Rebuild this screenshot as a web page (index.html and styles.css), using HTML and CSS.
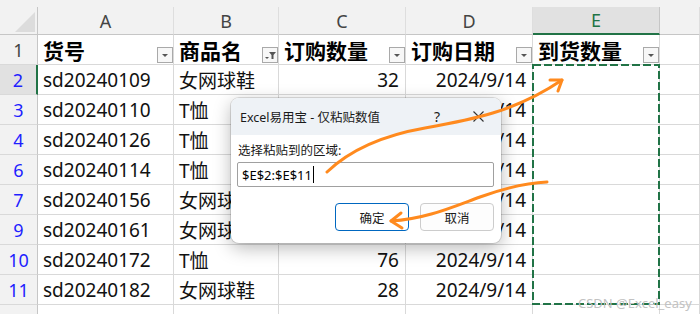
FILE: index.html
```html
<html>
  <head>
    <title>到货数量 - 仅粘贴数值</title>
    <link rel="stylesheet" href="styles.css">
  </head>
  <body>
    <div class="strip"></div>
    <div class="sheet">
      <div class="corner"><span class="tri"></span></div>
      <div class="colhead">A</div>
      <div class="colhead">B</div>
      <div class="colhead">C</div>
      <div class="colhead">D</div>
      <div class="colhead active">E</div>
      <div class="colhead"></div>

      <div class="rowhead plain">1</div>
      <div class="cell head">货号<span class="filter"><svg width="14" height="14"><polygon points="4,6 10,6 7,9" fill="#555"/></svg></span></div>
      <div class="cell head">商品名<span class="filter"><svg width="14" height="14"><polygon points="2,9 6,9 4,11" fill="#555"/><polygon points="6,4 13,4 10.5,7 10.5,11 8.5,11 8.5,7" fill="#555"/></svg></span></div>
      <div class="cell head">订购数量<span class="filter"><svg width="14" height="14"><polygon points="4,6 10,6 7,9" fill="#555"/></svg></span></div>
      <div class="cell head">订购日期<span class="filter"><svg width="14" height="14"><polygon points="4,6 10,6 7,9" fill="#555"/></svg></span></div>
      <div class="cell head">到货数量<span class="filter"><svg width="14" height="14"><polygon points="4,6 10,6 7,9" fill="#555"/></svg></span></div>
      <div class="cell"></div>

      <div class="rowhead active">2</div>
      <div class="cell">sd20240109</div>
      <div class="cell">女网球鞋</div>
      <div class="cell num">32</div>
      <div class="cell num">2024/9/14</div>
      <div class="cell"></div>
      <div class="cell"></div>

      <div class="rowhead">3</div>
      <div class="cell">sd20240110</div>
      <div class="cell">T恤</div>
      <div class="cell num">45</div>
      <div class="cell num">2024/9/14</div>
      <div class="cell"></div>
      <div class="cell"></div>

      <div class="rowhead">4</div>
      <div class="cell">sd20240126</div>
      <div class="cell">T恤</div>
      <div class="cell num">60</div>
      <div class="cell num">2024/9/14</div>
      <div class="cell"></div>
      <div class="cell"></div>

      <div class="rowhead">6</div>
      <div class="cell">sd20240114</div>
      <div class="cell">T恤</div>
      <div class="cell num">38</div>
      <div class="cell num">2024/9/14</div>
      <div class="cell"></div>
      <div class="cell"></div>

      <div class="rowhead">7</div>
      <div class="cell">sd20240156</div>
      <div class="cell">女网球鞋</div>
      <div class="cell num">25</div>
      <div class="cell num">2024/9/14</div>
      <div class="cell"></div>
      <div class="cell"></div>

      <div class="rowhead">9</div>
      <div class="cell">sd20240161</div>
      <div class="cell">女网球鞋</div>
      <div class="cell num">52</div>
      <div class="cell num">2024/9/14</div>
      <div class="cell"></div>
      <div class="cell"></div>

      <div class="rowhead">10</div>
      <div class="cell">sd20240172</div>
      <div class="cell">T恤</div>
      <div class="cell num">76</div>
      <div class="cell num">2024/9/14</div>
      <div class="cell"></div>
      <div class="cell"></div>

      <div class="rowhead">11</div>
      <div class="cell">sd20240182</div>
      <div class="cell">女网球鞋</div>
      <div class="cell num">28</div>
      <div class="cell num">2024/9/14</div>
      <div class="cell"></div>
      <div class="cell"></div>

      <div class="rowhead"></div>
      <div class="cell"></div>
      <div class="cell"></div>
      <div class="cell"></div>
      <div class="cell"></div>
      <div class="cell"></div>
      <div class="cell"></div>
    </div>

    <!-- copy marquee around E2:E11 -->
    <svg class="marquee" width="700" height="314">
      <rect x="533" y="65" width="126" height="239" fill="none" stroke="#217346" stroke-width="2" stroke-dasharray="8 3"/>
    </svg>

    <div class="dialog">
      <div class="dlg-title">
        <span class="dlg-name">Excel易用宝 - 仅粘贴数值</span>
        <span class="help">?</span>
        <span class="close"><svg width="11" height="11"><path d="M0.5 0.5 L10.5 10.5 M10.5 0.5 L0.5 10.5" stroke="#333" stroke-width="1.1"/></svg></span>
      </div>
      <div class="dlg-body">
        <div class="label">选择粘贴到的区域:</div>
        <div class="input">$E$2:$E$11<span class="caret"></span></div>
        <div class="buttons">
          <button class="btn primary">确定</button>
          <button class="btn">取消</button>
        </div>
      </div>
    </div>

    <svg class="arrows" width="700" height="314">
      <path d="M327 172 C352 148 385 135 425 128 C470 120 515 112 562 80" fill="none" stroke="#ff8a1e" stroke-width="3" stroke-linecap="round"/>
      <path d="M550 80 L562 80 L558 91" fill="none" stroke="#ff8a1e" stroke-width="3" stroke-linecap="round" stroke-linejoin="round"/>
      <path d="M547 182 C525 183 505 188 480 197 C450 208 425 219 391 221" fill="none" stroke="#ff8a1e" stroke-width="3" stroke-linecap="round"/>
      <path d="M401 213 L391 221 L402 228" fill="none" stroke="#ff8a1e" stroke-width="3" stroke-linecap="round" stroke-linejoin="round"/>
    </svg>

    <div class="watermark">CSDN @Excel_easy</div>
  </body>
</html>
```

FILE: styles.css
```css
body,
html {
  margin: 0;
  padding: 0;
  background: #ffffff;
  overflow: hidden;
  font-family: "Noto Sans", "Noto Sans CJK SC", sans-serif;
}

.strip {
  height: 7px;
  background: #f2f2f2;
}

.sheet {
  display: grid;
  grid-template-columns: 38px 136px 105px 127px 127px 127px 40px;
  grid-template-rows: 28px;
  grid-auto-rows: 30px;
}

.sheet > div {
  box-sizing: border-box;
  border-right: 1px solid #d9d9d9;
  border-bottom: 1px solid #d9d9d9;
}

.corner {
  background: #f2f2f2;
  position: relative;
  border-right: 1px solid #c6c6c6 !important;
  border-bottom: 1px solid #c6c6c6 !important;
}

.corner .tri {
  position: absolute;
  right: 2px;
  bottom: 2px;
  width: 0;
  height: 0;
  border-left: 20px solid transparent;
  border-bottom: 20px solid #dcdcdc;
}

.colhead {
  background: #f2f2f2;
  color: #444;
  font-size: 18px;
  display: flex;
  align-items: center;
  justify-content: center;
  border-bottom: 1px solid #c6c6c6 !important;
  border-right: 1px solid #dedede !important;
}

.colhead.active {
  background: #e1e1e1;
  color: #217346;
  border-bottom: 2px solid #217346 !important;
  border-right: 1px solid #c6c6c6 !important;
}

.rowhead {
  background: #f2f2f2;
  color: #1f1fff;
  font-size: 18px;
  display: flex;
  align-items: center;
  justify-content: center;
  border-right: 1px solid #c6c6c6 !important;
}

.rowhead.plain {
  color: #444;
}

.rowhead.active {
  background: #e1e1e1;
  border-right: 2px solid #217346 !important;
}

.cell {
  font-size: 19px;
  color: #111;
  padding: 0 5px;
  display: flex;
  align-items: center;
  white-space: nowrap;
  overflow: hidden;
}

.cell.num {
  justify-content: flex-end;
  padding-right: 6px;
}

.cell.head {
  font-weight: bold;
  font-size: 21px;
  color: #000;
  padding-right: 0;
}

.filter {
  margin-left: auto;
  align-self: flex-end;
  margin-bottom: 1px;
  width: 16px;
  height: 16px;
  box-sizing: border-box;
  border: 1px solid #a9a9a9;
  background: #f7f7f7;
  display: flex;
  align-items: center;
  justify-content: center;
}

.marquee,
.arrows {
  position: absolute;
  left: 0;
  top: 0;
  pointer-events: none;
}

.dialog {
  position: absolute;
  left: 231px;
  top: 98px;
  width: 270px;
  height: 145px;
  border-radius: 8px;
  background: #ffffff;
  box-shadow: 0 0 0 1px rgba(0, 0, 0, 0.12), 0 5px 18px rgba(0, 0, 0, 0.28);
  overflow: hidden;
  font-family: "Noto Sans", "Noto Sans CJK SC", sans-serif;
}

.dlg-title {
  height: 37px;
  background: #eef2f6;
  display: flex;
  align-items: center;
  padding-left: 9px;
  font-size: 12.5px;
  color: #1a1a1a;
}

.dlg-name {
  flex: 1;
}

.help {
  font-size: 14px;
  width: 20px;
  text-align: center;
  margin-right: 26px;
}

.close {
  width: 11px;
  height: 11px;
  margin-right: 17px;
  display: flex;
}

.dlg-body {
  padding: 8px 7px 0 6px;
}

.label {
  font-size: 12.5px;
  line-height: 16px;
  color: #1a1a1a;
  margin-left: 1px;
  margin-bottom: 3px;
}

.input {
  height: 25px;
  box-sizing: border-box;
  border: 1px solid #a0a0a0;
  border-radius: 2px;
  font-size: 13px;
  color: #000;
  padding-left: 4px;
  display: flex;
  align-items: center;
}

.caret {
  width: 1px;
  height: 17px;
  background: #000;
  margin-left: 1px;
}

.buttons {
  display: flex;
  justify-content: flex-end;
  gap: 11px;
  margin-top: 16px;
}

.btn {
  width: 74px;
  height: 28px;
  border: 1px solid #cccccc;
  border-radius: 4px;
  background: #fdfdfd;
  font-family: "Noto Sans CJK SC", sans-serif;
  font-size: 12.5px;
  color: #1a1a1a;
  padding: 0;
}

.btn.primary {
  border-color: #0067c0;
  background: #ffffff;
}

.watermark {
  position: absolute;
  left: 578px;
  top: 294px;
  font-family: "Noto Sans", sans-serif;
  font-size: 13px;
  color: #c2c2c2;
}
```
